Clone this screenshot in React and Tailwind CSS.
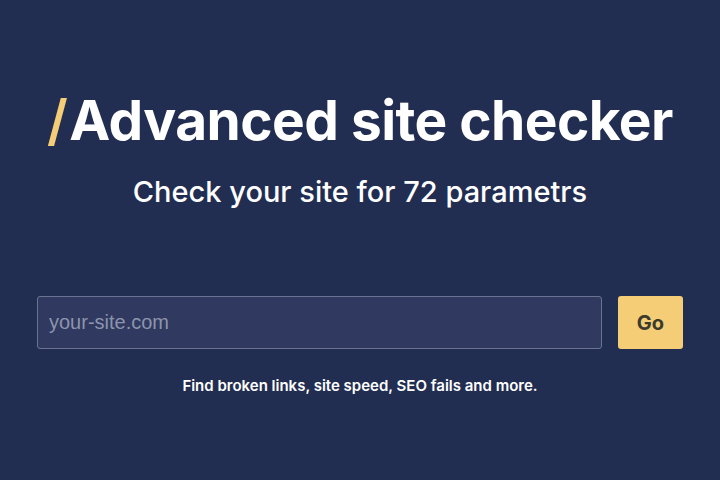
import React from "react";

const App = () => {
  return (
    <div className="w-[720px] h-[480px] bg-[#222d52] flex flex-col items-center font-['Inter',sans-serif] text-white">
      <h1 className="mt-[88px] flex items-center text-[55px] font-bold leading-[64px] tracking-[-0.55px]">
        <span className="text-[#f5cd76] font-semibold mr-[2px]">/</span>
        Advanced site checker
      </h1>
      <p className="mt-[22px] text-[29px] font-medium leading-[36px]">
        Check your site for 72 parametrs
      </p>
      <form className="mt-[86px] w-full px-[37px] flex gap-[16px]" onSubmit={(e) => e.preventDefault()}>
        <input
          type="text"
          placeholder="your-site.com"
          className="flex-1 h-[53px] rounded-[3px] border border-[#6b7390] bg-[#30395f] px-[11px] text-[20px] font-['Liberation_Sans',sans-serif] text-white placeholder:text-[#8d94ad] outline-none"
        />
        <button className="w-[65px] h-[53px] rounded-[3px] bg-[#f5cd76] text-[#3b3a2c] text-[20px] font-bold">
          Go
        </button>
      </form>
      <p className="mt-[27px] text-[15px] font-semibold leading-[20px]">
        Find broken links, site speed, SEO fails and more.
      </p>
    </div>
  );
};

export default App;
